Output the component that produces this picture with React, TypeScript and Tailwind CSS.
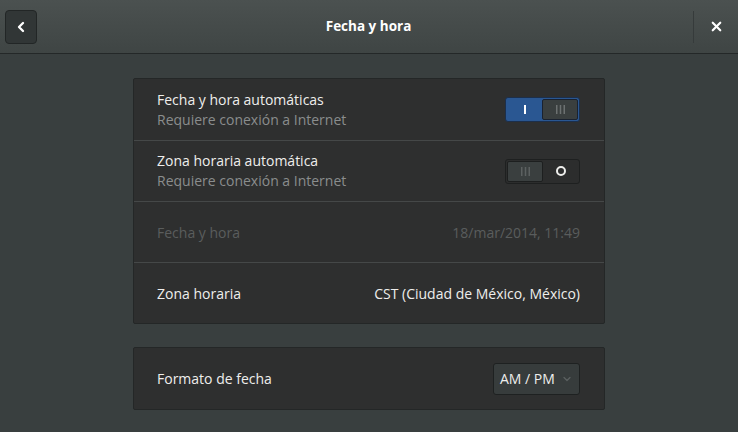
import { ChevronLeft, X, ChevronDown } from 'lucide-react';

const Grip = ({ color }: { color: string }) => (
  <svg width="11" height="9" viewBox="0 0 11 9">
    <rect x="1" y="0" width="1.5" height="9" fill={color} />
    <rect x="4.75" y="0" width="1.5" height="9" fill={color} />
    <rect x="8.5" y="0" width="1.5" height="9" fill={color} />
  </svg>
);

const SwitchOn = () => (
  <div className="flex h-[25px] w-[75px] rounded-[3px] border border-[#1c2f4b] bg-[#2a5792] p-[1px]">
    <div className="flex flex-1 items-center justify-center">
      <div className="h-[9px] w-[2px] bg-white" />
    </div>
    <div className="flex w-[36px] items-center justify-center rounded-[2px] border border-[#1a2230] bg-[#3a3f3f]">
      <Grip color="#6c7171" />
    </div>
  </div>
);

const SwitchOff = () => (
  <div className="flex h-[25px] w-[75px] rounded-[3px] border border-[#1e2020] bg-[#2c2d2d] p-[1px]">
    <div className="flex w-[36px] items-center justify-center rounded-[2px] border border-[#1d1f1f] bg-[#3a3f3f]">
      <Grip color="#5c6161" />
    </div>
    <div className="flex flex-1 items-center justify-center">
      <div className="h-[10px] w-[10px] rounded-full border-2 border-[#eeeeec]" />
    </div>
  </div>
);

export default function App() {
  return (
    <div
      className="flex h-[432px] w-[738px] flex-col overflow-hidden bg-[#393f3f] text-[14px] text-[#eeeeec]"
      style={{ fontFamily: '"Open Sans", "DejaVu Sans", sans-serif' }}
    >
      {/* Header bar */}
      <div className="flex h-[54px] shrink-0 items-center border-b border-[#242828] bg-gradient-to-b from-[#4b5150] to-[#3f4544]">
        <div className="w-[44px] pl-[5px]">
          <button className="flex h-[34px] w-[32px] items-center justify-center rounded-[4px] border border-[#222626] bg-[#313636] text-white">
            <ChevronLeft size={16} strokeWidth={3.5} />
          </button>
        </div>
        <div className="flex-1 text-center text-[13.5px] font-bold text-white">Fecha y hora</div>
        <div className="h-[32px] w-px bg-[#363b3b]" />
        <div className="flex w-[44px] items-center justify-center text-white">
          <X size={15} strokeWidth={3.5} />
        </div>
      </div>

      <div className="flex flex-col items-center pt-[24px]">
        {/* Main settings list */}
        <div className="w-[472px] rounded-[2px] border border-[#242727] bg-[#2e2f2f]">
          <div className="flex h-[61px] items-center justify-between pl-[23px] pr-[24px]">
            <div className="leading-[20px]">
              <div>Fecha y hora automáticas</div>
              <div className="text-[#8a8d8d]">Requiere conexión a Internet</div>
            </div>
            <SwitchOn />
          </div>
          <div className="flex h-[61px] items-center justify-between border-t border-[#454848] pl-[23px] pr-[24px]">
            <div className="leading-[20px]">
              <div>Zona horaria automática</div>
              <div className="text-[#8a8d8d]">Requiere conexión a Internet</div>
            </div>
            <SwitchOff />
          </div>
          <div className="flex h-[61px] items-center justify-between border-t border-[#454848] pl-[23px] pr-[24px] text-[#5a5d5d]">
            <span>Fecha y hora</span>
            <span>18/mar/2014, 11:49</span>
          </div>
          <div className="flex h-[61px] items-center justify-between border-t border-[#454848] pl-[23px] pr-[24px]">
            <span>Zona horaria</span>
            <span>CST (Ciudad de México, México)</span>
          </div>
        </div>

        {/* Format list */}
        <div className="mt-[23px] w-[472px] rounded-[2px] border border-[#242727] bg-[#2e2f2f]">
          <div className="flex h-[61px] items-center justify-between pl-[23px] pr-[24px]">
            <span>Formato de fecha</span>
            <div className="flex h-[32px] w-[87px] items-center gap-[6px] rounded-[3px] border border-[#1e2121] bg-[#373c3c] pl-[6px]">
              <span>AM / PM</span>
              <ChevronDown size={12} strokeWidth={2.5} className="text-[#5b6060]" />
            </div>
          </div>
        </div>
      </div>
    </div>
  );
}
